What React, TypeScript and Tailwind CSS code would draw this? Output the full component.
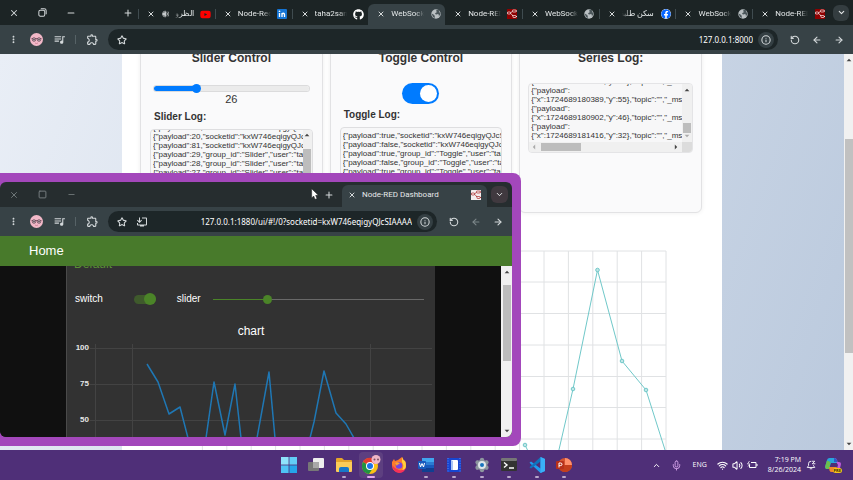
import React from "react";
import {
  ArrowLeft,
  ArrowRight,
  ChevronDown,
  ChevronUp,
  Info,
  Mic,
  Minus,
  Plus,
  RotateCcw,
  Settings,
  Square,
  Star,
  Volume2,
  Wifi,
  X,
} from "lucide-react";
import { MdMoreVert, MdOutlineExtension, MdOutlineInstallDesktop, MdQueueMusic } from "react-icons/md";
import { FaFacebook, FaGithub, FaYoutube } from "react-icons/fa";

const UI = "font-['Open_Sans','Noto_Sans',sans-serif]";
const TAB_FONT = "font-[Roboto,'Noto_Sans',sans-serif]";
const ARIAL = "font-['Liberation_Sans',Arial,sans-serif]";

function NodeRedIcon({ light = false }: { light?: boolean }) {
  const bg = light ? "#f4eeee" : "#8f0000";
  const fg = light ? "#a51c1c" : "#ffffff";
  return (
    <svg viewBox="0 0 20 20" className="size-[10px]" aria-hidden="true">
      <rect width="20" height="20" rx="1" fill={bg} />
      <path d="M0 8h4c6 0 5-4 10-4h6M4 8c7 0 5 7 11 7h5" fill="none" stroke={fg} strokeWidth="1.6" />
      <rect x="1" y="6" width="6" height="4" rx="1" fill={bg} stroke={fg} strokeWidth="1.3" />
      <rect x="11" y="2" width="7" height="4" rx="1" fill={bg} stroke={fg} strokeWidth="1.3" />
      <rect x="12" y="13" width="6" height="4" rx="1" fill={bg} stroke={fg} strokeWidth="1.3" />
    </svg>
  );
}

function LinkedInIcon() {
  return (
    <svg viewBox="0 0 20 20" className="size-[10px]" aria-hidden="true">
      <rect width="20" height="20" rx="2" fill="#1474d4" />
      <path d="M5 8v8M10 16V8M10 11q0-2.500 2.500-2.500T15 11v5" fill="none" stroke="#fff" strokeWidth="2.6" />
      <circle cx="5" cy="4.500" r="1.700" fill="#fff" />
    </svg>
  );
}

function GlobeIcon() {
  return (
    <svg viewBox="0 0 20 20" className="size-[10px]" aria-hidden="true">
      <circle cx="10" cy="10" r="9.500" fill="#b9bfc2" />
      <path d="M12 1l-2 3 2 2-3 2-1 2 3 1 3-1 2 2-1 3 3-3 1-4-3-2 1-3z" fill="#4b565a" />
      <path d="M1 9l4 2 3 3-1 2 1 3-4-3z" fill="#4b565a" />
    </svg>
  );
}

function Avatar() {
  return (
    <svg viewBox="0 0 26 26" className="size-[13px]" aria-hidden="true">
      <circle cx="13" cy="13" r="13" fill="#f2b8c8" />
      <path d="M3 11h20" fill="none" stroke="#6b3a4d" strokeWidth="1.5" />
      <circle cx="8" cy="13" r="3.500" fill="#d9c3cd" stroke="#5b3a49" strokeWidth="1.500" />
      <circle cx="18" cy="13" r="3.500" fill="#d9c3cd" stroke="#5b3a49" strokeWidth="1.500" />
      <circle cx="8" cy="13" r="1.500" fill="#47303c" />
      <circle cx="18" cy="13" r="1.500" fill="#47303c" />
      <path d="M10 20q3 2 6 0" fill="none" stroke="#c06a84" strokeWidth="1.3" />
    </svg>
  );
}

function Speaker() {
  return (
    <svg viewBox="0 0 16 16" className="size-2 shrink-0" fill="none" stroke="#c5cacc" strokeWidth="1.4" aria-hidden="true">
      <path d="M9 2a6 6 0 1 0 0 12" />
      <path d="M4 6v4h2l4 3V3L6 6z" fill="#c5cacc" />
      <path d="M12 5q3 3 0 6M14 3q4 5 0 10" />
    </svg>
  );
}

function RestoreIcon() {
  return (
    <svg viewBox="0 0 16 16" className="size-[9px]" fill="none" stroke="currentColor" strokeWidth="1.800" aria-hidden="true">
      <rect x="1.500" y="4" width="10.500" height="10.500" rx="2.500" />
      <path d="M5 1.500h6q3.500 0 3.500 3.500v6" />
    </svg>
  );
}

function IconButton({ label, className = "", children }: { label: string; className?: string; children: React.ReactNode }) {
  return (
    <button type="button" aria-label={label} className={`flex shrink-0 items-center justify-center ${className}`}>
      {children}
    </button>
  );
}

type Tab = { text: string; icon: React.ReactNode; active?: boolean; rtl?: boolean; audio?: boolean; divider?: boolean };

const tabs: Tab[] = [
  { text: "الظروف", icon: <FaYoutube className="size-[11px] text-[#ff0000]" />, rtl: true, audio: true, divider: true },
  { text: "Node-Red", icon: <LinkedInIcon />, divider: true },
  { text: "taha2sami", icon: <FaGithub className="size-[11px] text-white" />, divider: true },
  { text: "WebSocket", icon: <GlobeIcon />, active: true },
  { text: "Node-RED", icon: <NodeRedIcon /> },
  { text: "WebSocket", icon: <GlobeIcon />, divider: true },
  { text: "سكن طلبة", icon: <FaFacebook className="size-[10px] rounded-full bg-white text-[#0866ff]" />, rtl: true, divider: true },
  { text: "WebSocket", icon: <GlobeIcon />, divider: true },
  { text: "Node-RED", icon: <NodeRedIcon />, divider: true },
];

function BrowserTab({ tab }: { tab: Tab }) {
  return (
    <div
      className={`relative flex h-[21px] min-w-0 flex-1 items-center pr-1 pb-px pl-[9px] ${
        tab.active ? "rounded-t-md bg-[#374246]" : ""
      }`}
    >
      {tab.divider && <span className="absolute left-0 h-[10px] w-px bg-[#3f4b4f]" />}
      <IconButton label={`Close ${tab.text}`} className="w-2">
        <X className="size-2 text-[#d5d9da]" strokeWidth={3} />
      </IconButton>
      {tab.audio && <span className="ml-[6px] flex"><Speaker /></span>}
      <span
        dir={tab.rtl ? "rtl" : "ltr"}
        className={`ml-[6px] min-w-0 flex-1 overflow-hidden text-[8px] leading-3 whitespace-nowrap text-[#e2e6e7] ${TAB_FONT} ${
          tab.rtl
            ? "[mask-image:linear-gradient(to_left,black_75%,transparent)]"
            : "[mask-image:linear-gradient(to_right,black_75%,transparent)]"
        }`}
      >
        {tab.text}
      </span>
      <span className="ml-[6px] flex w-[11px] shrink-0 justify-center">{tab.icon}</span>
    </div>
  );
}

function Toolbar({ url, install = false }: { url: string; install?: boolean }) {
  return (
    <div className="flex h-[29px] shrink-0 items-center bg-[#374246] pr-[9px] pl-2 text-[#d3d8da]">
      <IconButton label="Menu" className="w-[11px]"><MdMoreVert className="size-[13px]" /></IconButton>
      <IconButton label="Profile" className="ml-[11px]"><Avatar /></IconButton>
      <IconButton label="Media" className="ml-[10px]"><MdQueueMusic className="size-[13px]" /></IconButton>
      <span className="ml-[9px] h-[9px] w-px bg-[#566266]" />
      <IconButton label="Extensions" className="ml-[10px]"><MdOutlineExtension className="size-[13px]" /></IconButton>
      <div className="ml-[9px] flex h-[21px] min-w-0 flex-1 items-center rounded-full bg-[#1d2628] pr-1 pl-[9px]">
        <IconButton label="Bookmark"><Star className="size-[10px]" strokeWidth={2.5} /></IconButton>
        {install && (
          <IconButton label="Install" className="ml-[9px]"><MdOutlineInstallDesktop className="size-3 -scale-x-100" /></IconButton>
        )}
        <input
          aria-label="Address"
          readOnly
          value={url}
          className="min-w-0 flex-1 bg-transparent px-[5px] text-right font-['Noto_Sans',sans-serif] text-[8px] leading-3 text-white outline-none"
        />
        <IconButton label="Site information" className="size-4 rounded-full bg-[#343f43]">
          <Info className="size-[10px]" strokeWidth={2.5} />
        </IconButton>
      </div>
      <IconButton label="Reload" className="ml-3"><RotateCcw className="size-[10px]" strokeWidth={2.6} /></IconButton>
      <IconButton label="Forward" className={`ml-3 ${install ? "text-[#7b8588]" : ""}`}>
        <ArrowLeft className="size-[10px]" strokeWidth={2.6} />
      </IconButton>
      <IconButton label="Back" className="ml-3"><ArrowRight className="size-[10px]" strokeWidth={2.6} /></IconButton>
    </div>
  );
}

function Triangle({ dir, className = "" }: { dir: "up" | "down" | "left" | "right"; className?: string }) {
  const d = { up: "M1 7l4-4 4 4z", down: "M1 3l4 4 4-4z", left: "M7 1L3 5l4 4z", right: "M3 1l4 4-4 4z" }[dir];
  return (
    <svg viewBox="0 0 10 10" className={`size-[6px] shrink-0 ${className}`} fill="currentColor" aria-hidden="true">
      <path d={d} />
    </svg>
  );
}

const sliderLog = [
  '{"payload":21,"socketid":"kxW746eqigyQJcSIAAAA"}',
  '{"payload":20,"socketid":"kxW746eqigyQJcSIAAAA"}',
  '{"payload":81,"socketid":"kxW746eqigyQJcSIAAAA"}',
  '{"payload":29,"group_id":"Slider","user":"taha"}',
  '{"payload":28,"group_id":"Slider","user":"taha"}',
  '{"payload":27,"group_id":"Slider","user":"taha"}',
  '{"payload":26,"group_id":"Slider","user":"taha"}',
];
const toggleLog = [
  '{"payload":true,"socketid":"kxW746eqigyQJcSIAAAA"}',
  '{"payload":false,"socketid":"kxW746eqigyQJcSIAAAA"}',
  '{"payload":true,"group_id":"Toggle","user":"taha"}',
  '{"payload":false,"group_id":"Toggle","user":"taha"}',
  '{"payload":true,"group_id":"Toggle","user":"taha"}',
];
const seriesLog = [
  '{"x":1724689179871,"y":94},"topic":"","_msgid":"a1"}',
  '{"payload":',
  '{"x":1724689180389,"y":55},"topic":"","_msgid":"a2"}',
  '{"payload":',
  '{"x":1724689180902,"y":46},"topic":"","_msgid":"a3"}',
  '{"payload":',
  '{"x":1724689181416,"y":32},"topic":"","_msgid":"a4"}',
];

function LogLines({ lines, scrolled }: { lines: string[]; scrolled?: boolean }) {
  return (
    <div className="min-w-0 flex-1 overflow-hidden pl-[2px]">
      <div className={`overflow-hidden text-[8px] leading-[9px] whitespace-nowrap text-[#333] ${scrolled ? "-mt-[7px]" : "pt-[3px]"}`}>
        {lines.map((l, i) => (
          <div key={i}>{l}</div>
        ))}
      </div>
    </div>
  );
}

function Card({ title, children }: { title: string; children: React.ReactNode }) {
  return (
    <section className="h-[175px] min-w-0 overflow-hidden rounded-md border border-[#e2e2e4] bg-[#fafafb] px-2 pt-[11px] shadow-[0_0_5px_rgba(0,0,0,0.07)]">
      <h3 className="text-center text-[12px] leading-4 font-bold text-[#333]">{title}</h3>
      {children}
    </section>
  );
}

const gridX = Array.from({ length: 20 }, (_, i) => 544 - i * 24.4);
const gridY = [20, 51, 82.5, 114, 145.5, 176.5, 208];
const series: [number, number][] = [
  [403, 214], [427, 240], [451, 158], [475.5, 39], [500, 130], [524, 159], [544, 222],
];
const seriesLine = "403,214 427,262 451,158 475.5,39 500,130 524,159 544,222";

function SeriesChart() {
  return (
    <svg viewBox="0 0 600 240" className="mt-[18px] block w-full" role="img" aria-label="Series chart">
      <g stroke="#e0e2e4" strokeWidth="1">
        {gridY.map((y) => <line key={y} x1="60" x2="544" y1={y} y2={y} />)}
        {gridX.map((x) => <line key={x} x1={x} x2={x} y1="20" y2="240" />)}
      </g>
      <polyline points={seriesLine} fill="none" stroke="#70c8c9" strokeWidth="1" />
      {series.slice(0, 6).map(([x, y]) => (
        <circle key={x} cx={x} cy={y} r="1.8" fill="#bfe6e6" stroke="#70c8c9" strokeWidth="1" />
      ))}
    </svg>
  );
}

function WebPage() {
  return (
    <main className={`flex min-h-0 flex-1 bg-[linear-gradient(110deg,#e9eef6,#bac9dd)] ${ARIAL}`}>
      <div className="min-w-0 flex-1 overflow-hidden">
        <div className="mx-auto -mt-4 w-full max-w-[600px] bg-white">
          <div className="grid grid-cols-3 gap-[7px] pr-5 pl-[18px]">
            <Card title="Slider Control">
              <div className="px-[5px] pt-[18px]">
                <input
                  type="range"
                  aria-label="Slider Control"
                  min="0"
                  max="100"
                  defaultValue="26"
                  className="block h-[9px] w-full appearance-none rounded-full bg-transparent [&::-webkit-slider-runnable-track]:h-[5px] [&::-webkit-slider-runnable-track]:rounded-full [&::-webkit-slider-runnable-track]:bg-[linear-gradient(to_right,#007bff_28%,#ebebeb_28%)] [&::-webkit-slider-runnable-track]:shadow-[0_0_0_1px_rgba(0,0,0,0.12)] [&::-webkit-slider-thumb]:-mt-[2px] [&::-webkit-slider-thumb]:size-[9px] [&::-webkit-slider-thumb]:appearance-none [&::-webkit-slider-thumb]:rounded-full [&::-webkit-slider-thumb]:bg-[#007bff]"
                />
              </div>
              <p className="text-center text-[11px] leading-3 text-[#333]">26</p>
              <h4 className="mt-[6px] px-[5px] text-[10px] leading-3 font-bold text-[#333]">Slider Log:</h4>
              <div className="mx-px mt-[6px] flex h-[70px] overflow-hidden rounded-sm border border-[#dedee0] bg-[#f7f7f8]">
                <LogLines lines={sliderLog} scrolled />
                <div className="flex w-[9px] flex-col items-center bg-[#f0f0f0] pt-[2px] text-[#444]">
                  <Triangle dir="up" />
                  <span className="mt-[11px] h-9 w-2 bg-[#bdbdbd]" />
                </div>
              </div>
            </Card>
            <Card title="Toggle Control">
              <label className="mx-auto mt-[17px] block h-[21px] w-[37px]">
                <input type="checkbox" role="switch" defaultChecked aria-label="Toggle Control" className="peer sr-only" />
                <span className="flex h-full items-center justify-end rounded-full bg-[#007bff] px-[2px]">
                  <span className="size-[17px] rounded-full bg-white" />
                </span>
              </label>
              <h4 className="mt-[5px] px-[5px] text-[10px] leading-3 font-bold text-[#333]">Toggle Log:</h4>
              <div className="mx-px mt-[6px] flex h-[70px] overflow-hidden rounded-sm border border-[#dedee0] bg-[#f7f7f8]">
                <LogLines lines={toggleLog} />
              </div>
            </Card>
            <Card title="Series Log:">
              <div className="mt-[17px] flex h-[70px] flex-col overflow-hidden rounded-sm border border-[#e4e4e6] bg-[#f7f7f8]">
                <div className="flex min-h-0 flex-1">
                  <LogLines lines={seriesLog} scrolled />
                  <div className="flex w-[10px] flex-col items-center justify-between bg-[#f0f0f0] py-[3px] text-[#444]">
                    <Triangle dir="up" />
                    <span className="mt-auto h-[10px] w-2 bg-[#bdbdbd]" />
                    <Triangle dir="down" className="text-[#aaa]" />
                  </div>
                </div>
                <div className="flex h-[10px] shrink-0 items-center bg-[#f0f0f0] text-[#444]">
                  <Triangle dir="left" className="ml-[2px] text-[#aaa]" />
                  <span className="ml-1 h-2 w-10 bg-[#bdbdbd]" />
                  <Triangle dir="right" className="mr-[3px] ml-auto" />
                  <span className="h-full w-[10px] bg-[#dcdcdc]" />
                </div>
              </div>
            </Card>
          </div>
          <SeriesChart />
        </div>
      </div>
      <div className="flex w-[9px] flex-col items-center bg-[#f1f1f1] py-[3px] text-[#444]">
        <Triangle dir="up" />
        <span className="mt-[76px] h-[214px] w-2 bg-[#c1c1c1]" />
        <Triangle dir="down" className="mt-auto" />
      </div>
    </main>
  );
}

const blueLine =
  "80,98 91,116 102,148 113,141 121,172 139,172 147,116 158,169 168,118 174,172 190,172 202,106 208,172 243,172 247,156 257,105 269,147 279,158 287,172";

function DashboardWindow() {
  return (
    <div className="absolute top-[173px] left-0 w-[521px] rounded-tr-lg rounded-br-lg bg-[#a347bb] py-[9px] pr-[9px]">
      <div className="flex h-[255px] flex-col overflow-hidden rounded-md bg-[#262d2f]">
        <div className="flex h-[25px] shrink-0 items-center pl-[9px] text-[#7d8587]">
          <IconButton label="Close window"><X className="size-[10px]" strokeWidth={2} /></IconButton>
          <IconButton label="Maximize window" className="ml-[19px]"><Square className="size-[9px]" strokeWidth={2.4} /></IconButton>
          <IconButton label="Minimize window" className="ml-5"><Minus className="size-[9px]" strokeWidth={2} /></IconButton>
          <IconButton label="New tab" className="ml-auto text-[#d3d8da]"><Plus className="size-[10px]" strokeWidth={2.5} /></IconButton>
          <div className="mt-[3px] ml-2 flex h-[22px] w-[145px] items-center rounded-t-md bg-[#374246] px-[6px] pb-[2px]">
            <IconButton label="Close tab"><X className="size-2 text-[#d5d9da]" strokeWidth={3} /></IconButton>
            <span className={`ml-[6px] text-[8px] leading-3 whitespace-nowrap text-[#e6e9ea] ${TAB_FONT}`}>Node-RED Dashboard</span>
            <span className="ml-auto"><NodeRedIcon light /></span>
          </div>
          <IconButton label="Search tabs" className="mr-1 ml-1 size-[17px] rounded-md bg-[#40393f] text-[#e6e9ea]">
            <ChevronDown className="size-[9px]" strokeWidth={2.6} />
          </IconButton>
        </div>
        <Toolbar url="127.0.0.1:1880/ui/#!/0?socketid=kxW746eqigyQJcSIAAAA" install />
        <header className={`flex h-[30px] shrink-0 items-center bg-[#487a2b] px-[29px] text-[13px] text-white ${ARIAL}`}>Home</header>
        <div className={`flex min-h-0 flex-1 bg-[#101010] ${ARIAL}`}>
          <div className="flex min-w-0 flex-1 justify-center overflow-hidden">
            <div className="flex w-[369px] flex-col border-l border-[#4a4a4a] bg-[#323232] text-white">
              <div className="-mt-[9px] px-[7px] text-[12px] leading-[14px] text-[#5a8f35]">Default</div>
              <div className="mt-[21px] flex items-center pr-[11px] pl-2 text-[10px] leading-[14px]">
                <label htmlFor="dash-switch">switch</label>
                <input id="dash-switch" type="checkbox" role="switch" defaultChecked className="peer sr-only" />
                <span className="ml-[31px] flex h-[9px] w-[22px] items-center justify-end rounded-full bg-[#3f5a2c]">
                  <span className="size-3 shrink-0 rounded-full bg-[#4b8428]" />
                </span>
                <label htmlFor="dash-slider" className="ml-[21px]">slider</label>
                <input
                  id="dash-slider"
                  type="range"
                  defaultValue="25"
                  className="ml-3 block h-[9px] min-w-0 flex-1 appearance-none bg-transparent [&::-webkit-slider-runnable-track]:h-px [&::-webkit-slider-runnable-track]:bg-[linear-gradient(to_right,#4b8428_26%,#696969_26%)] [&::-webkit-slider-thumb]:-mt-1 [&::-webkit-slider-thumb]:size-[9px] [&::-webkit-slider-thumb]:appearance-none [&::-webkit-slider-thumb]:rounded-full [&::-webkit-slider-thumb]:bg-[#4b8428]"
                />
              </div>
              <div className="mt-[17px] text-center text-[12px] leading-4">chart</div>
              <svg viewBox="0 73 368 99" className="block w-full shrink-0" role="img" aria-label="chart">
                <g stroke="#434343" strokeWidth="1">
                  <line x1="23" x2="365" y1="82.5" y2="82.5" />
                  <line x1="23" x2="365" y1="118.5" y2="118.5" />
                  <line x1="23" x2="365" y1="154.5" y2="154.5" />
                  <line x1="28.5" x2="28.5" y1="78" y2="172" />
                  <line x1="65.5" x2="65.5" y1="78" y2="172" />
                  <line x1="303.5" x2="303.5" y1="78" y2="172" />
                </g>
                <g fill="#e6e6e6" fontSize="8" fontWeight="700" textAnchor="end">
                  <text x="22" y="84">100</text>
                  <text x="22" y="120">75</text>
                  <text x="22" y="156">50</text>
                </g>
                <polyline points={blueLine} fill="none" stroke="#1f77b4" strokeWidth="1.5" strokeLinejoin="round" />
              </svg>
            </div>
          </div>
          <div className="flex w-[11px] flex-col items-center bg-[#f1f1f1] py-[3px] text-[#444]">
            <Triangle dir="up" />
            <span className="mt-[10px] h-[76px] w-2 bg-[#bdbdbd]" />
            <Triangle dir="down" className="mt-auto" />
          </div>
        </div>
      </div>
    </div>
  );
}

const ic = "size-4";
const apps: { name: string; running?: boolean; active?: boolean; art: React.ReactNode }[] = [
  {
    name: "Start",
    art: (
      <svg viewBox="0 0 16 16" className={ic}>
        <path d="M0 0h7.6v7.6H0z" fill="#8fe3fb" />
        <path d="M8.4 0H16v7.6H8.4z" fill="#62cdf6" />
        <path d="M0 8.4h7.6V16H0z" fill="#4fc3f4" />
        <path d="M8.4 8.4H16V16H8.4z" fill="#25a5ea" />
      </svg>
    ),
  },
  {
    name: "Task view",
    art: (
      <svg viewBox="0 0 16 16" className={ic}>
        <rect x="5" y="1" width="11" height="10" rx="1" fill="#ededed" />
        <rect x="0" y="5" width="11" height="9" rx="1" fill="#777" />
        <rect x="5" y="5" width="6" height="6" fill="#a8a8a8" />
      </svg>
    ),
  },
  {
    name: "File Explorer",
    running: true,
    art: (
      <svg viewBox="0 0 16 16" className={ic}>
        <path d="M0 2q0-1 1-1h5l2 2h7q1 0 1 1v10H0z" fill="#e5a52a" />
        <path d="M0 5h16v9q0 1-1 1H1q-1 0-1-1z" fill="#fccc58" />
        <path d="M3 15v-3q0-2 2-2h6q2 0 2 2v3z" fill="#1878c9" />
      </svg>
    ),
  },
  {
    name: "Chrome",
    running: true,
    active: true,
    art: (
      <svg viewBox="0 0 20 20" className="size-5">
        <circle cx="9" cy="11" r="8" fill="#fbc116" />
        <path d="M9 11L2 7a8 8 0 0 1 14 0z" fill="#e33b2e" />
        <path d="M9 11L2 7a8 8 0 0 0 6 12l4-6z" fill="#229342" />
        <circle cx="9" cy="11" r="4" fill="#fff" />
        <circle cx="9" cy="11" r="3" fill="#1a73e8" />
        <circle cx="15" cy="4.5" r="4.5" fill="#efb6c6" />
        <circle cx="13.500" cy="4.5" r="1" fill="#7a5063" />
        <circle cx="17" cy="4.5" r="1" fill="#7a5063" />
      </svg>
    ),
  },
  {
    name: "Firefox",
    art: (
      <svg viewBox="0 0 16 16" className={ic}>
        <path d="M1 5l2-3 1 2 3-1 4-3q1 3 3 4 1 1 1 4a7 7 0 0 1-14 1z" fill="#ff7a2a" />
        <path d="M11 0q1 3 3 4 1 2 1 5a7 7 0 0 1-5 6q4-5 1-10z" fill="#ffd13c" />
        <path d="M1 8q1 7 7 8 5 0 7-5-3 3-7 2-4-1-7-5z" fill="#f5305a" />
        <circle cx="8" cy="8.5" r="3.3" fill="#7543e3" />
        <path d="M4 6q3-2 5 1-3 0-3 2z" fill="#ffa436" />
      </svg>
    ),
  },
  {
    name: "Word",
    running: true,
    art: (
      <svg viewBox="0 0 16 16" className={ic}>
        <rect x="4" y="1" width="12" height="4" fill="#41a5ee" />
        <rect x="4" y="5" width="12" height="3" fill="#2b7cd3" />
        <rect x="4" y="8" width="12" height="3" fill="#185abd" />
        <rect x="4" y="11" width="12" height="4" fill="#103f91" />
        <rect x="0" y="4" width="8" height="8" rx="1" fill="#185abd" />
        <path d="M1.5 6l1 4L4 6.5 5.5 10l1-4" fill="none" stroke="#fff" strokeWidth="1" />
      </svg>
    ),
  },
  {
    name: "Notes",
    running: true,
    art: (
      <svg viewBox="0 0 16 16" className={ic}>
        <rect x="1" y="1" width="14" height="14" rx="1" fill="#1746d1" />
        <path d="M2 1v14M14 1v14" stroke="#5b86f0" strokeWidth="1" strokeDasharray="1 1.5" />
        <rect x="5" y="3" width="7" height="10" rx="1" fill="#fff" />
        <path d="M5 3l2 1v9H5z" fill="#a9c4f5" />
      </svg>
    ),
  },
  {
    name: "Settings",
    running: true,
    art: (
      <span className="relative flex">
        <Settings className="size-4 text-[#8d979e]" fill="#8d979e" strokeWidth={2} />
        <span className="absolute inset-1 rounded-full border-2 border-[#dfe6ea] bg-[#1673bd]" />
      </span>
    ),
  },
  {
    name: "Terminal",
    running: true,
    art: (
      <svg viewBox="0 0 16 16" className={ic}>
        <rect x="0" y="1" width="16" height="13" rx="1" fill="#333" />
        <rect x="0" y="1" width="16" height="3" rx="1" fill="#777" />
        <path d="M3 5.5L6 8l-3 2.5M8 11h5" fill="none" stroke="#fff" strokeWidth="1.4" />
      </svg>
    ),
  },
  {
    name: "Visual Studio Code",
    running: true,
    art: (
      <svg viewBox="0 0 16 16" className={ic}>
        <path d="M11.5 0L16 2v12l-4.500 2L0.500 5.800 2 4.500 11.500 11.500z" fill="#1f9cf0" />
        <path d="M11.500 0v4.500L2 11.500 0.500 10.200z" fill="#0f74bd" />
        <path d="M11.500 0L16 2v12l-4.500 2z" fill="#3ab0f7" />
      </svg>
    ),
  },
  {
    name: "PowerPoint",
    running: true,
    art: (
      <svg viewBox="0 0 16 16" className={ic}>
        <circle cx="9" cy="8" r="7" fill="#d35230" />
        <path d="M9 1a7 7 0 0 1 7 7H9z" fill="#ff8f6b" />
        <path d="M2 8h14a7 7 0 0 1-14 0z" fill="#c43e1c" />
        <rect x="0" y="4" width="8" height="8" rx="1" fill="#b7301a" />
        <path d="M3 10.5V6h1.500q1.500 0 1.500 1.300t-1.500 1.300H3" fill="none" stroke="#fff" strokeWidth="1" />
      </svg>
    ),
  },
];

function Taskbar() {
  return (
    <footer className={`grid h-[30px] shrink-0 grid-cols-[1fr_300px_1fr] items-center bg-[#4f2f78] text-white ${UI}`}>
      <span />
      <nav aria-label="Applications" className="flex justify-between">
        {apps.map((a) => (
          <button
            key={a.name}
            type="button"
            aria-label={a.name}
            className={`relative flex h-[26px] w-6 items-center justify-center rounded-sm ${a.active ? "bg-[#5d3f80]" : ""}`}
          >
            {a.art}
            {a.running && (
              <span className={`absolute bottom-0 h-[2px] rounded-full ${a.active ? "w-2 bg-[#e2a6ee]" : "w-1 bg-[#b9a8cb]"}`} />
            )}
          </button>
        ))}
      </nav>
      <div className="flex items-center justify-end pr-3">
        <IconButton label="Show hidden icons"><ChevronUp className="size-[9px]" strokeWidth={2.5} /></IconButton>
        <IconButton label="Microphone" className="ml-[10px] text-[#d9a5ec]"><Mic className="size-[11px]" strokeWidth={2} /></IconButton>
        <span className="ml-[11px] text-[7px] leading-3">ENG</span>
        <button type="button" aria-label="Network, sound and battery" className="ml-[10px] flex items-center gap-1">
          <Wifi className="size-[11px]" strokeWidth={2.5} />
          <Volume2 className="size-[11px]" strokeWidth={2.2} />
          <svg viewBox="0 0 22 16" className="h-2 w-[11px]" fill="none" stroke="currentColor" strokeWidth="2">
            <path d="M8 3h10v10H5V8M20 6v4" />
            <path d="M5 0L1 6h5L2 11" strokeWidth="1.5" />
          </svg>
        </button>
        <time className="ml-[10px] text-right text-[7px] leading-[10px]">
          7:19 PM
          <br />
          8/26/2024
        </time>
        <IconButton label="Notifications" className="ml-[5px]">
          <svg viewBox="0 0 16 16" className="size-[10px]" fill="none" stroke="currentColor" strokeWidth="1.4">
            <path d="M8 2a4 4 0 0 0-4 4v3l-2 3h12l-2-3V8M6 14h4" />
            <path d="M9 2h5l-4 4h5" />
          </svg>
        </IconButton>
        <button type="button" aria-label="Copilot preview" className="relative ml-[9px] flex">
          <svg viewBox="0 0 16 16" className="size-4">
            <path d="M4.500 1H9q1.500 0 2 1.500L12 6H6l-2 6H2q-2.500 0-1.700-3L2 3q.6-2 2.500-2z" fill="#2aa5dc" />
            <path d="M.3 9L2 3.500 5.500 5 4 12H2Q-.3 12 .3 9z" fill="#6cc04a" />
            <path d="M9 1q2.500 0 3 2l.6 2H14q2.500 0 1.800 3L14.500 13q-.6 2-2.500 2h-1l2-7z" fill="#c25be0" />
            <path d="M4 10h8l-1 4q-.3 1-1.500 1H6.500q-1.500 0-2-1.500z" fill="#f08a2b" />
            <path d="M9 1q2.500 0 3 2l.6 2H9z" fill="#3159c9" />
            <path d="M6.500 6h4L9.500 10h-4z" fill="#4f2f78" />
          </svg>
          <span className="absolute -right-px bottom-0 rounded-sm bg-[#f5c21c] px-px text-[4px] leading-[5px] font-bold text-[#3a2b00]">PRE</span>
        </button>
      </div>
    </footer>
  );
}

export default function App() {
  return (
    <div className={`relative flex h-screen flex-col overflow-hidden bg-[#1c2425] ${UI}`}>
      <div className="flex h-[25px] shrink-0 items-center pl-[9px] text-[#d3d8da]">
        <IconButton label="Close"><X className="size-[10px]" strokeWidth={2.5} /></IconButton>
        <IconButton label="Restore" className="ml-[19px]"><RestoreIcon /></IconButton>
        <IconButton label="Minimize" className="ml-[19px]"><Minus className="size-[10px]" strokeWidth={2.5} /></IconButton>
        <IconButton label="New tab" className="ml-[47px]"><Plus className="size-[10px]" strokeWidth={2.5} /></IconButton>
        <div className="mt-1 ml-[5px] flex min-w-0 flex-1">
          {tabs.map((t, i) => (
            <BrowserTab key={i} tab={t} />
          ))}
        </div>
        <IconButton label="Search tabs" className="mr-1 ml-1 size-4 rounded-md bg-[#343d40] text-[#e6e9ea]">
          <ChevronDown className="size-[9px]" strokeWidth={2.8} />
        </IconButton>
      </div>
      <Toolbar url="127.0.0.1:8000" />
      <WebPage />
      <Taskbar />
      <DashboardWindow />
      <svg viewBox="0 0 12 18" className="absolute top-[188px] left-[311px] h-3 w-2" aria-hidden="true">
        <path d="M1 1v14l3-3 2 5 3-1-2-5h4z" fill="#fff" stroke="#222" strokeWidth="0.8" />
      </svg>
    </div>
  );
}
